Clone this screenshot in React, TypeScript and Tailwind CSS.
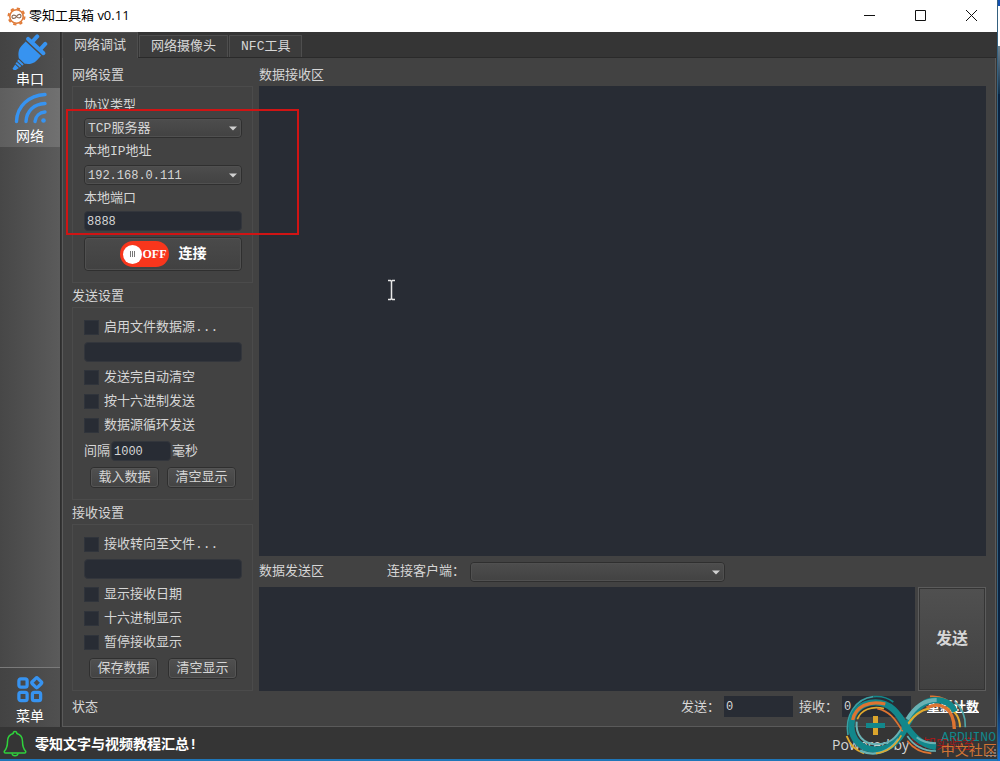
import { ReactNode, useState } from "react";

type TOptionProps = {
  id: string;
  label: string;
};

type TSelectProps = {
  id: string;
  options: string[];
  className?: string;
};

type TGroupProps = {
  title: string;
  children: ReactNode;
};

const AppIcon = () => (
  <svg width="19" height="19" viewBox="0 0 19 19" fill="none">
    <circle cx="9.5" cy="9.5" r="8" stroke="#e07b39" strokeWidth="2" strokeDasharray="3.2 3.083" />
    <circle cx="9.5" cy="9.5" r="6.7" stroke="#e07b39" strokeWidth="1.6" />
    <path
      d="M9.5 9.5c-1.5-2-4.5-2-4.5.3s3 2.2 4.5-.3 4.5-2.8 4.5-.4-3 2.4-4.5.4z"
      stroke="#8a6a55"
      strokeWidth="1.2"
    />
  </svg>
);

const PlugIcon = () => (
  <svg width="36" height="36" viewBox="0 0 36 36" fill="#3793f0">
    <g transform="translate(0 1) rotate(43 18 18)">
      <rect x="10" y="-1" width="4" height="10" rx="2" />
      <rect x="21" y="-1" width="4" height="10" rx="2" />
      <rect x="5" y="7" width="25" height="4" rx="2" />
      <path d="M7 12.5h21v6c0 6-4 9-6.5 11h-8c-2.5-2-6.5-5-6.5-11z" />
      <path d="M14 30.5h7v2h-7zM14.5 33.5h6v2h-6zM15 36.5h5l-1 5h-3z" />
    </g>
  </svg>
);

const SignalIcon = () => (
  <svg width="34" height="34" viewBox="0 0 34 34" fill="none" stroke="#3793f0" strokeWidth="3.4" strokeLinecap="round">
    <path d="M32 2.5C16 3.500 4 14 3.500 29.500" />
    <path d="M32 11.500C21 12 13.500 19 13 29.500" />
    <path d="M32 20c-5.500.5-9.500 4-10 9.500" />
    <circle cx="30.5" cy="28.5" r="2.3" fill="#3793f0" stroke="none" />
  </svg>
);

const MenuIcon = () => (
  <svg width="28" height="28" viewBox="0 0 28 28" fill="none" stroke="#3793f0" strokeWidth="3.4">
    <rect x="2.5" y="3" width="8.5" height="8.5" rx="2" />
    <rect x="2.5" y="17" width="8.5" height="8.5" rx="2" />
    <rect x="16.5" y="17" width="8.5" height="8.5" rx="2" />
    <rect x="17" y="3" width="8" height="8" rx="1.5" transform="rotate(45 21 7)" />
  </svg>
);

const BellIcon = () => (
  <svg width="24" height="27" viewBox="0 0 24 27" fill="none" stroke="#2fd13c" strokeWidth="1.5" strokeLinejoin="round">
    <path d="M12 1.5c-1.5 0-1.8 1-1.8 2C6.5 4.5 4.5 7.5 4.5 11.5c0 5-.8 7-3 9.5-.7 1 0 2 1 2h19c1 0 1.7-1 1-2-2.2-2.5-3-4.5-3-9.5 0-4-2-7-5.7-8 0-1-.3-2-1.8-2z" />
    <path d="M9 23.5c.5 3 5.5 3 6 0" />
  </svg>
);

const ArduinoLogo = () => (
  <svg width="180" height="81" viewBox="0 0 540 243" fill="none">
    {/* outer accents */}
    <path d="M84 165C74 110 105 56 160 50" stroke="#3aa0a3" strokeWidth="5" />
    <path d="M160 50c22-2 42 2 60 16" stroke="#12878b" strokeWidth="5" />
    <path d="M80 168c10 28 28 44 52 52" stroke="#e0a92e" strokeWidth="6" />
    <path d="M330 49c35-3 62 14 76 34" stroke="#dd7431" strokeWidth="5" />
    <path d="M405 66c20 16 32 42 31 76" stroke="#4fa6a9" strokeWidth="5" />
    <path d="M380 80c28 14 40 32 40 62" stroke="#e0a92e" strokeWidth="6" />
    {/* left loop */}
    <path
      d="M258 142C235 98 210 67 166 67C122 67 94 98 94 137C94 178 124 209 166 209C214 209 238 180 258 142"
      stroke="#12878b"
      strokeWidth="19"
    />
    <path d="M98 120c8-40 48-60 98-48" stroke="#dd7431" strokeWidth="10" />
    <path d="M112 118c10-28 44-42 80-32" stroke="#e0a92e" strokeWidth="5" />
    <path d="M110 125c-4 40 20 68 60 68s58-20 76-50" stroke="#69b2b4" strokeWidth="6" />
    <path d="M172 86c40 8 55 35 76 68" stroke="#dd7431" strokeWidth="5" />
    <path d="M120 212c45 20 90 4 115-35" stroke="#69b2b4" strokeWidth="7" />
    <path d="M168 220c35-4 58-22 76-54" stroke="#e0a92e" strokeWidth="5" />
    {/* right loop */}
    <path d="M252 152C280 95 305 62 345 60C375 60 395 72 405 95" stroke="#12878b" strokeWidth="18" />
    <path d="M262 118c22-38 48-58 88-58" stroke="#69b2b4" strokeWidth="12" />
    <path d="M320 84c40-22 82 0 83 63" stroke="#dd7431" strokeWidth="10" />
    <path d="M258 142c20-34 42-52 70-56" stroke="#e0a92e" strokeWidth="7" />
    <path d="M240 112c30 42 50 80 108 90" stroke="#12878b" strokeWidth="18" />
    <path d="M290 172c16 12 32 17 58 18" stroke="#69b2b4" strokeWidth="6" />
    <path d="M262 168c18 28 44 45 86 45" stroke="#69b2b4" strokeWidth="5" />
    <path d="M262 182c18 24 40 36 72 38" stroke="#dd7431" strokeWidth="5" />
    <rect x="159" y="108" width="15" height="57" fill="#dba52c" />
    <rect x="138" y="129" width="57" height="15" fill="#12878b" />
    <text x="364" y="184" fontSize="39" fill="#12878b" className="font-['Liberation_Mono',monospace]">
      ARDUINO
    </text>
    <text x="362" y="226" fontSize="42" fill="#cf7434" className="font-['Noto_Sans_CJK_SC',sans-serif]">
      中文社区
    </text>
    {/* window size grip */}
    <path
      d="M522 210h6M510 219h6M522 219h6M498 228h6M510 228h6M522 228h6"
      stroke="#8a8a8a"
      strokeWidth="4"
    />
  </svg>
);

const SelectBox = ({ id, options, className }: TSelectProps) => (
  <div className={`relative ${className ?? ""}`}>
    <select
      id={id}
      className="block h-5 w-full appearance-none rounded-sm border border-[#2f2f2f] bg-linear-to-b from-[#4d4d4d] to-[#424242] pt-px pl-[3px] leading-[18px] outline outline-[#505050] -outline-offset-2"
    >
      {options.map((option) => (
        <option key={option}>{option}</option>
      ))}
    </select>
    <svg className="pointer-events-none absolute top-2 right-[5px]" width="8" height="5" viewBox="0 0 8 5">
      <path d="M0 0.5h8L4 4.5z" fill="#d0d0d0" />
    </svg>
  </div>
);

const Option = ({ id, label }: TOptionProps) => (
  <div className="flex h-6 items-center gap-[5px]">
    <input
      id={id}
      type="checkbox"
      className="h-[15px] w-[15px] appearance-none border border-[#30343b] bg-[#282c34] checked:bg-[#3793f0]"
    />
    <label htmlFor={id} className="pt-[2px]">
      {label}
    </label>
  </div>
);

const PathInput = ({ label }: { label: string }) => (
  <input
    type="text"
    aria-label={label}
    className="my-[3px] block h-5 w-full rounded-sm border border-[#33363c] bg-[#282c34] px-[2px]"
  />
);

const SmallButton = ({ children }: { children: ReactNode }) => (
  <button
    type="button"
    className="h-[21px] w-[69px] rounded-sm border border-[#2f2f2f] bg-linear-to-b from-[#505050] to-[#434343] pt-px leading-[18px] outline outline-[#555] -outline-offset-2"
  >
    {children}
  </button>
);

const Group = ({ title, children }: TGroupProps) => (
  <section>
    <h2 className="h-6 leading-[27px]">{title}</h2>
    <div className="relative border border-[#4b4b4b] pr-[10px] pb-[11px] pl-[11px]">{children}</div>
  </section>
);

const tabs = ["网络调试", "网络摄像头", "NFC工具"];

const App = () => {
  const [activeTab, setActiveTab] = useState(0);

  return (
    <div className="relative flex min-h-screen bg-[#353535] font-['Liberation_Mono','Noto_Sans_CJK_SC',monospace] text-[13px] text-[#d6d6d6]">
      <div className="flex min-w-0 flex-1 flex-col border-r border-b-2 border-r-[#35617f] border-b-[#1f76b8]">
        <header className="flex h-8 items-center bg-white pr-5 pl-[7px] font-['Open_Sans','Noto_Sans_CJK_SC',sans-serif] text-black">
          <AppIcon />
          <h1 className="ml-[3px] flex-1">零知工具箱 v0.11</h1>
          <div className="flex gap-[39px]">
            <button type="button" aria-label="最小化">
              <svg width="12" height="12" viewBox="0 0 12 12" stroke="#111">
                <path d="M1 5.5h11" />
              </svg>
            </button>
            <button type="button" aria-label="最大化">
              <svg width="12" height="12" viewBox="0 0 12 12" fill="none" stroke="#111">
                <path d="M1.5 0.5h10v10h-10z" />
              </svg>
            </button>
            <button type="button" aria-label="关闭">
              <svg width="12" height="12" viewBox="0 0 12 12" stroke="#111">
                <path d="M1 0l11 11M12 0L1 11" />
              </svg>
            </button>
          </div>
        </header>

        <div className="flex flex-1">
          <nav className="flex w-[61px] flex-col border-r border-[#2d2d2d] bg-linear-to-r from-[#474747] to-[#5b5b5b] font-['Noto_Sans_CJK_SC',sans-serif] text-[14px] text-white">
            <button type="button" className="flex h-14 flex-col items-center bg-linear-to-r from-[#434343] to-[#505050] pt-[2px] leading-[16px]">
              <PlugIcon />
              串口
            </button>
            <button type="button" className="flex h-[59px] flex-col items-center bg-linear-to-r from-[#5e5e5e] to-[#717171] pt-1 leading-[18px]">
              <SignalIcon />
              网络
            </button>
            <div className="flex-1" />
            <button type="button" className="flex h-[60px] flex-col items-center border-t border-[#7a7a7a] bg-linear-to-r from-[#434343] to-[#505050] pt-2 leading-6">
              <MenuIcon />
              菜单
            </button>
          </nav>

          <main className="flex min-w-0 flex-1 flex-col pr-px pl-px">
            <div role="tablist" className="flex h-[26px] items-end gap-px border-b border-[#2a2a2a]">
              {tabs.map((tab, index) => (
                <button
                  key={tab}
                  type="button"
                  role="tab"
                  aria-selected={activeTab === index}
                  onClick={() => setActiveTab(index)}
                  className={
                    activeTab === index
                      ? "-mb-px h-[26px] border-x border-t border-[#4e4e4e] bg-[#424242] px-[11px]"
                      : "h-[22px] border border-b-0 border-[#4e4e4e] bg-[#3c3c3c] px-[11px]"
                  }
                >
                  {tab}
                </button>
              ))}
            </div>

            <div className="flex flex-1 flex-col border-x border-b border-[#5a5a5a] bg-[#424242] px-[9px]">
              <div className="flex flex-1 gap-[6px] pt-1">
                <div className="w-[181px] shrink-0">
                  <Group title="网络设置">
                    <div className="flex flex-col pt-[5px]">
                      <label htmlFor="protocol" className="h-[26px] leading-[28px]">
                        协议类型
                      </label>
                      <SelectBox id="protocol" options={["TCP服务器", "TCP客户端", "UDP"]} />
                      <label htmlFor="ip" className="h-[27px] leading-[28px]">
                        本地IP地址
                      </label>
                      <SelectBox id="ip" options={["192.168.0.111"]} className="text-[12px]" />
                      <label htmlFor="port" className="h-[26px] leading-[28px]">
                        本地端口
                      </label>
                      <input
                        id="port"
                        type="text"
                        defaultValue="8888"
                        className="h-5 rounded-sm border border-[#33363c] bg-[#282c34] px-[2px] pt-[2px] text-[12px]"
                      />
                      <button
                        type="button"
                        className="mt-[6px] flex h-[34px] items-center justify-center gap-[10px] rounded-sm border border-[#2f2f2f] bg-linear-to-b from-[#4a4a4a] to-[#414141] text-[14px] font-bold text-white outline outline-[#505050] -outline-offset-2"
                      >
                        <span className="flex h-[26px] w-[49px] items-center gap-px rounded-full bg-[#f8361c] pl-[3px] font-['Liberation_Serif',serif] text-[12px]">
                          <span className="flex h-[19px] w-[19px] items-center justify-center gap-px rounded-full bg-white">
                            <i className="h-[6px] w-px bg-[#777]" />
                            <i className="h-[6px] w-px bg-[#777]" />
                            <i className="h-[6px] w-px bg-[#777]" />
                          </span>
                          OFF
                        </span>
                        连接
                      </button>
                    </div>
                    {/* highlight frame around the server settings */}
                    <div className="pointer-events-none absolute top-[22px] left-[-7px] z-10 h-[126px] w-[233px] border-2 border-[#d01414]" />
                  </Group>

                  <Group title="发送设置">
                    <div className="pt-[7px]">
                      <Option id="send-file" label="启用文件数据源..." />
                      <PathInput label="发送文件路径" />
                      <Option id="send-clear" label="发送完自动清空" />
                      <Option id="send-hex" label="按十六进制发送" />
                      <Option id="send-loop" label="数据源循环发送" />
                      <div className="mt-1 flex h-5 items-center gap-px">
                        <label htmlFor="interval" className="pt-[2px]">
                          间隔
                        </label>
                        <input
                          id="interval"
                          type="text"
                          defaultValue="1000"
                          className="h-5 w-[60px] rounded-sm border border-[#33363c] bg-[#282c34] px-[2px] pt-[2px] text-[12px]"
                        />
                        <span className="pt-[2px]">毫秒</span>
                      </div>
                      <div className="mt-[6px] flex justify-center gap-2">
                        <SmallButton>载入数据</SmallButton>
                        <SmallButton>清空显示</SmallButton>
                      </div>
                    </div>
                  </Group>

                  <Group title="接收设置">
                    <div className="pt-[7px]">
                      <Option id="recv-file" label="接收转向至文件..." />
                      <PathInput label="接收文件路径" />
                      <Option id="recv-date" label="显示接收日期" />
                      <Option id="recv-hex" label="十六进制显示" />
                      <Option id="recv-pause" label="暂停接收显示" />
                      <div className="mt-1 flex justify-center gap-[10px]">
                        <SmallButton>保存数据</SmallButton>
                        <SmallButton>清空显示</SmallButton>
                      </div>
                    </div>
                  </Group>
                </div>

                <div className="flex min-w-0 flex-1 flex-col">
                  <label htmlFor="received" className="h-6 leading-[27px]">
                    数据接收区
                  </label>
                  <div className="relative flex flex-1">
                    <textarea id="received" className="flex-1 resize-none bg-[#282c34] p-1" />
                    <svg
                      className="pointer-events-none absolute top-[193px] left-[128px]"
                      width="9"
                      height="22"
                      viewBox="0 0 9 22"
                      fill="none"
                      stroke="#e8e8e8"
                      strokeWidth="1.5"
                    >
                      <path d="M1 1.5h2.5l1 1 1-1H8M4.5 2v18M1 20.5h2.5l1-1 1 1H8" />
                    </svg>
                  </div>
                  <div className="flex h-[31px] items-center">
                    <label htmlFor="outgoing" className="w-32 pt-px">
                      数据发送区
                    </label>
                    <label htmlFor="client" className="mr-[5px] pt-px">
                      连接客户端：
                    </label>
                    <SelectBox id="client" options={[""]} className="w-[255px]" />
                  </div>
                  <div className="flex h-[104px] gap-[3px]">
                    <textarea id="outgoing" className="min-w-0 flex-1 resize-none bg-[#282c34] p-1" />
                    <button
                      type="button"
                      className="w-[68px] border border-[#5c5c5c] bg-linear-to-b from-[#505050] to-[#414141] pt-[2px] text-[16px] font-bold outline outline-[#353535] -outline-offset-2"
                    >
                      发送
                    </button>
                  </div>
                </div>
              </div>

              <div className="mb-[5px] flex h-[30px] items-center">
                <span className="flex-1 pt-[3px]">状态</span>
                <label htmlFor="sent-count" className="mr-1 pt-[3px]">
                  发送：
                </label>
                <input
                  id="sent-count"
                  type="text"
                  defaultValue="0"
                  className="mr-[6px] h-[21px] w-[69px] bg-[#282c34] px-[2px] pt-[2px] text-[12px]"
                />
                <label htmlFor="recv-count" className="mr-1 pt-[3px]">
                  接收：
                </label>
                <input
                  id="recv-count"
                  type="text"
                  defaultValue="0"
                  className="mr-4 h-[21px] w-[69px] bg-[#282c34] px-[2px] pt-[2px] text-[12px]"
                />
                <a href="#reset" className="mr-[7px] pt-[3px] font-bold text-white underline">
                  重新计数
                </a>
              </div>
            </div>
          </main>
        </div>

        <footer className="flex h-8 items-center pr-[22px] pl-[3px]">
          <BellIcon />
          <p className="ml-2 flex-1 pt-[5px] text-[14px] font-bold text-white">零知文字与视频教程汇总!</p>
          <span className="mr-px pt-[2px] font-['Open_Sans',sans-serif] text-[14px]">Powered by</span>
          <a href="#lab" className="pt-[3px] text-[#a01c1c]">
            零知实验室
          </a>
        </footer>
      </div>

      {/* slice of the desktop behind the window */}
      <div className="flex w-[2px] flex-col bg-[#0b2340]">
        <div className="h-[6px] bg-[#1450b0]" />
        <div className="h-10 bg-white" />
        <div className="h-12 bg-linear-to-b from-[#6c7f8c] to-[#12304a]" />
        <div className="flex-1" />
        <div className="h-[70px] bg-linear-to-b from-[#0b2340] to-[#1270d8]" />
      </div>

      <div className="pointer-events-none absolute right-0 bottom-0">
        <ArduinoLogo />
      </div>
    </div>
  );
};

export default App;
